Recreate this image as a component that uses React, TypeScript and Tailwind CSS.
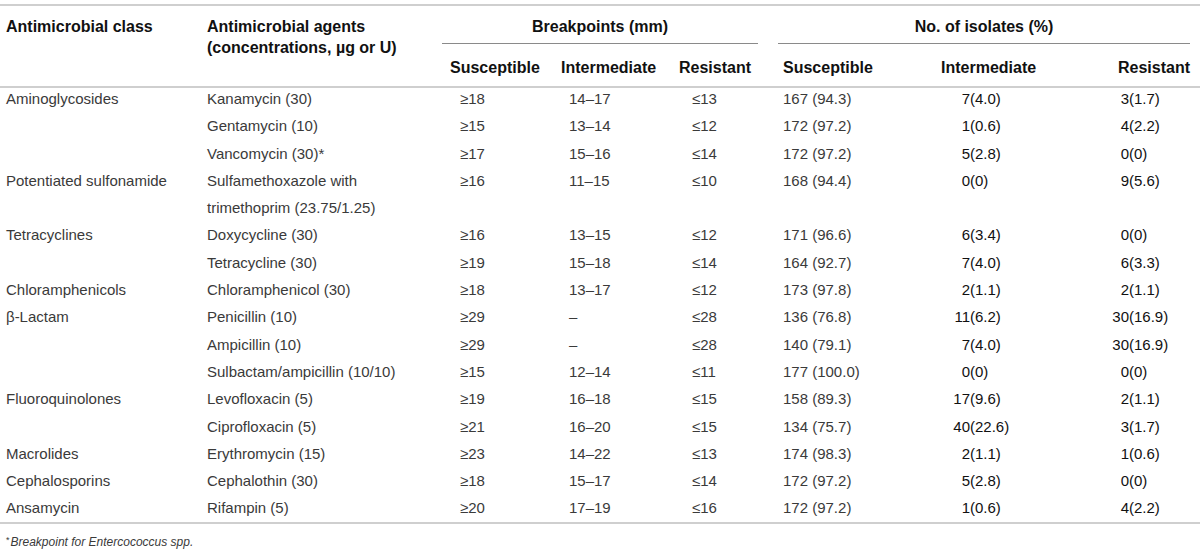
import React from "react";

type Row = {
  cls?: string;
  agent: string[];
  s: string;
  i: string;
  r: string;
  ns: string;
  ni: [string, string];
  nr: [string, string];
};

const rows: Row[] = [
  { cls: "Aminoglycosides", agent: ["Kanamycin (30)"], s: "≥18", i: "14–17", r: "≤13", ns: "167 (94.3)", ni: ["7", "(4.0)"], nr: ["3", "(1.7)"] },
  { agent: ["Gentamycin (10)"], s: "≥15", i: "13–14", r: "≤12", ns: "172 (97.2)", ni: ["1", "(0.6)"], nr: ["4", "(2.2)"] },
  { agent: ["Vancomycin (30)*"], s: "≥17", i: "15–16", r: "≤14", ns: "172 (97.2)", ni: ["5", "(2.8)"], nr: ["0", "(0)"] },
  { cls: "Potentiated sulfonamide", agent: ["Sulfamethoxazole with", "trimethoprim (23.75/1.25)"], s: "≥16", i: "11–15", r: "≤10", ns: "168 (94.4)", ni: ["0", "(0)"], nr: ["9", "(5.6)"] },
  { cls: "Tetracyclines", agent: ["Doxycycline (30)"], s: "≥16", i: "13–15", r: "≤12", ns: "171 (96.6)", ni: ["6", "(3.4)"], nr: ["0", "(0)"] },
  { agent: ["Tetracycline (30)"], s: "≥19", i: "15–18", r: "≤14", ns: "164 (92.7)", ni: ["7", "(4.0)"], nr: ["6", "(3.3)"] },
  { cls: "Chloramphenicols", agent: ["Chloramphenicol (30)"], s: "≥18", i: "13–17", r: "≤12", ns: "173 (97.8)", ni: ["2", "(1.1)"], nr: ["2", "(1.1)"] },
  { cls: "β-Lactam", agent: ["Penicillin (10)"], s: "≥29", i: "–", r: "≤28", ns: "136 (76.8)", ni: ["11", "(6.2)"], nr: ["30", "(16.9)"] },
  { agent: ["Ampicillin (10)"], s: "≥29", i: "–", r: "≤28", ns: "140 (79.1)", ni: ["7", "(4.0)"], nr: ["30", "(16.9)"] },
  { agent: ["Sulbactam/ampicillin (10/10)"], s: "≥15", i: "12–14", r: "≤11", ns: "177 (100.0)", ni: ["0", "(0)"], nr: ["0", "(0)"] },
  { cls: "Fluoroquinolones", agent: ["Levofloxacin (5)"], s: "≥19", i: "16–18", r: "≤15", ns: "158 (89.3)", ni: ["17", "(9.6)"], nr: ["2", "(1.1)"] },
  { agent: ["Ciprofloxacin (5)"], s: "≥21", i: "16–20", r: "≤15", ns: "134 (75.7)", ni: ["40", "(22.6)"], nr: ["3", "(1.7)"] },
  { cls: "Macrolides", agent: ["Erythromycin (15)"], s: "≥23", i: "14–22", r: "≤13", ns: "174 (98.3)", ni: ["2", "(1.1)"], nr: ["1", "(0.6)"] },
  { cls: "Cephalosporins", agent: ["Cephalothin (30)"], s: "≥18", i: "15–17", r: "≤14", ns: "172 (97.2)", ni: ["5", "(2.8)"], nr: ["0", "(0)"] },
  { cls: "Ansamycin", agent: ["Rifampin (5)"], s: "≥20", i: "17–19", r: "≤16", ns: "172 (97.2)", ni: ["1", "(0.6)"], nr: ["4", "(2.2)"] },
];

const cols = "grid grid-cols-[201px_241px_113px_117px_96px_132px_160px_140px]";

export default function App() {
  return (
    <div
      className="w-[1200px] h-[553px] bg-white overflow-hidden"
      style={{ fontFamily: '"Liberation Sans", Arial, sans-serif' }}
    >
      <div className="pt-[4px]">
        {/* header */}
        <div className={`${cols} grid-rows-[auto_auto] border-t-2 border-b-2 border-[#cfcfcf] text-[16px] font-bold text-[#111]`}>
          <div className="row-span-2 pl-[6px] pt-[11px] leading-[20.7px]">Antimicrobial class</div>
          <div className="row-span-2 pl-[6px] pt-[11px] leading-[20.7px]">
            <div>Antimicrobial agents</div>
            <div>(concentrations, µg or U)</div>
          </div>
          <div className="col-span-3 mr-[10px] pt-[11px] pb-[6px] leading-[20px] text-center border-b border-[#8a8a8a]">
            Breakpoints (mm)
          </div>
          <div className="col-span-3 ml-[10px] mr-[10px] pt-[11px] pb-[6px] leading-[20px] text-center border-b border-[#8a8a8a]">
            No. of isolates (%)
          </div>
          <div className="pl-[8px] pt-[14px] pb-[8px] leading-[20px]">Susceptible</div>
          <div className="pl-[6px] pt-[14px] pb-[8px] leading-[20px]">Intermediate</div>
          <div className="pl-[7px] pt-[14px] pb-[8px] leading-[20px]">Resistant</div>
          <div className="pl-[15px] pt-[14px] pb-[8px] leading-[20px]">Susceptible</div>
          <div className="pl-[41px] pt-[14px] pb-[8px] leading-[20px]">Intermediate</div>
          <div className="pr-[10px] pt-[14px] pb-[8px] leading-[20px] text-right">Resistant</div>
        </div>

        {/* body */}
        <div className="border-b-2 border-[#cfcfcf] -mt-[3px] text-[15px] leading-[27.3px]">
          {rows.map((r, idx) => (
            <div key={idx} className={cols}>
              <div className="pl-[6px] text-[#3a3a3a]">{r.cls ?? ""}</div>
              <div className="pl-[6px] text-[#3a3a3a]">
                {r.agent.map((a, k) => (
                  <div key={k}>{a}</div>
                ))}
              </div>
              <div className="pl-[18px] text-[#3a3a3a]">{r.s}</div>
              <div className="pl-[14px] text-[#3a3a3a]">{r.i}</div>
              <div className="pl-[20px] text-[#3a3a3a]">{r.r}</div>
              <div className="pl-[15px] text-[#3a3a3a]">{r.ns}</div>
              <div className="pl-[38px] text-[#111] whitespace-nowrap">
                <span className="inline-block w-[32px] text-right">{r.ni[0]}</span>
                <span>{r.ni[1]}</span>
              </div>
              <div className="pl-[38px] text-[#111] whitespace-nowrap">
                <span className="inline-block w-[31px] text-right">{r.nr[0]}</span>
                <span>{r.nr[1]}</span>
              </div>
            </div>
          ))}
        </div>

        {/* footnote */}
        <div className="pl-[6px] pt-[8px] text-[12px] leading-[16px] text-[#3a3a3a]">
          <span className="text-[9px] align-[3px] mr-[1px]">*</span>
          <span className="italic">Breakpoint for Entercococcus spp.</span>
        </div>
      </div>
    </div>
  );
}
